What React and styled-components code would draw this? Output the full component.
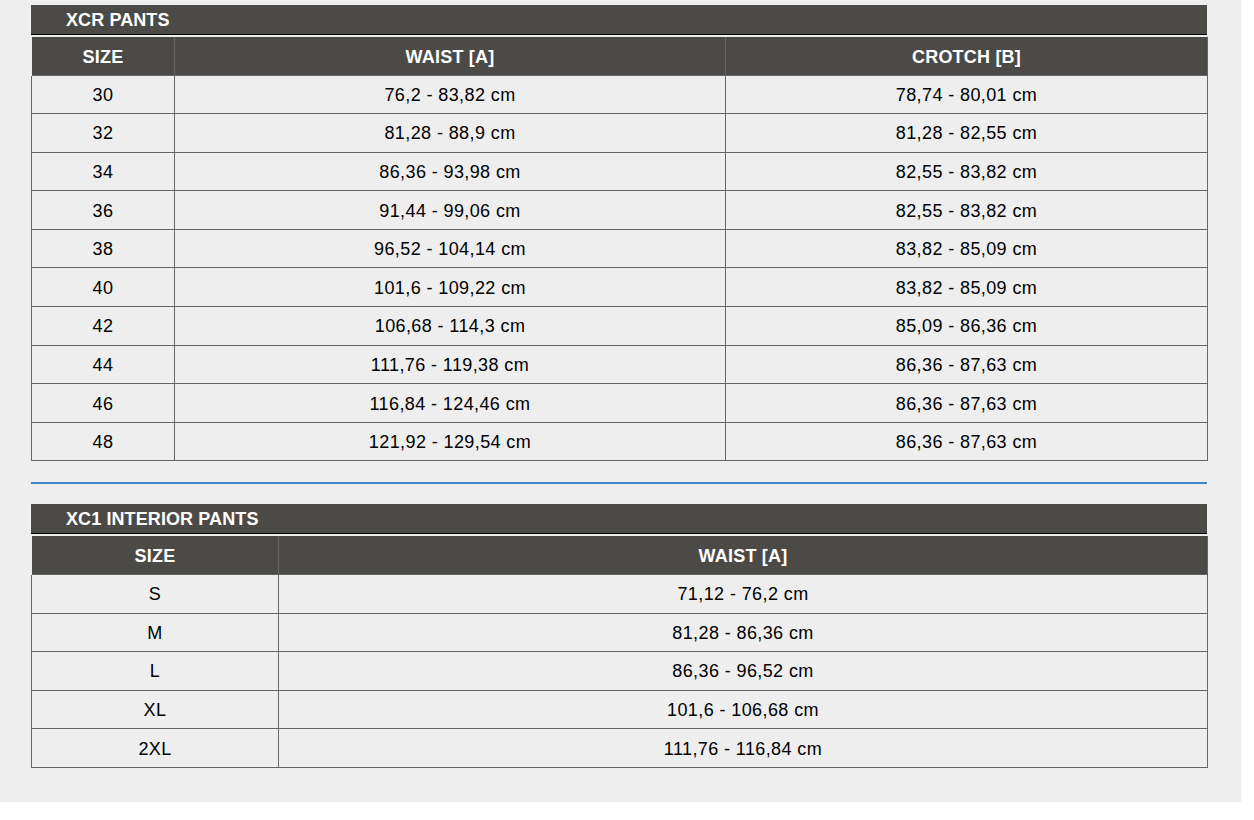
import React from "react";
import styled, { createGlobalStyle } from "styled-components";

const Global = createGlobalStyle`
  html, body { margin: 0; padding: 0; background: #ffffff; }
  body { font-family: "Liberation Sans", Arial, sans-serif; }
`;

const Page = styled.div`
  width: 1241px;
  box-sizing: border-box;
  background: #eeeeee;
  padding: 5px 34px 34px 31px;
  display: flex;
  flex-direction: column;
`;

const Section = styled.section`
  display: flex;
  flex-direction: column;
`;

const TitleBar = styled.div`
  height: 29px;
  background: #4c4a47;
  border-bottom: 1px solid #000;
  color: #fff;
  font-weight: bold;
  font-size: 18px;
  line-height: 31px;
  padding-left: 35px;
  margin-bottom: 2px;
  letter-spacing: 0.1px;
`;

const Divider = styled.hr`
  margin: 21px 0 20px;
  border: 0;
  height: 2px;
  background: #3f87c9;
`;

const Table = styled.table`
  width: 1176px;
  border-collapse: collapse;
  table-layout: fixed;
  font-size: 18px;
`;

const HeadCell = styled.th`
  background: #4c4a47;
  color: #fff;
  font-weight: bold;
  height: 38px;
  padding: 3px 0 0;
  box-sizing: border-box;
  border-left: 1px solid #666;
  border-right: 1px solid #666;
  text-align: center;
  letter-spacing: 0.2px;
  &:first-child { border-left-color: #eeeeee; }
`;

const Row = styled.tr`
  height: 38.6px;
`;

const Cell = styled.td`
  border: 1px solid #666;
  text-align: center;
  color: #000;
  padding: 2px 0 0;
  letter-spacing: 0.4px;
`;

const xcr = [
  ["30", "76,2 - 83,82 cm", "78,74 - 80,01 cm"],
  ["32", "81,28 - 88,9 cm", "81,28 - 82,55 cm"],
  ["34", "86,36 - 93,98 cm", "82,55 - 83,82 cm"],
  ["36", "91,44 - 99,06 cm", "82,55 - 83,82 cm"],
  ["38", "96,52 - 104,14 cm", "83,82 - 85,09 cm"],
  ["40", "101,6 - 109,22 cm", "83,82 - 85,09 cm"],
  ["42", "106,68 - 114,3 cm", "85,09 - 86,36 cm"],
  ["44", "111,76 - 119,38 cm", "86,36 - 87,63 cm"],
  ["46", "116,84 - 124,46 cm", "86,36 - 87,63 cm"],
  ["48", "121,92 - 129,54 cm", "86,36 - 87,63 cm"],
];

const xc1 = [
  ["S", "71,12 - 76,2 cm"],
  ["M", "81,28 - 86,36 cm"],
  ["L", "86,36 - 96,52 cm"],
  ["XL", "101,6 - 106,68 cm"],
  ["2XL", "111,76 - 116,84 cm"],
];

function SizeTable({ title, cols, widths, rows }) {
  return (
    <Section>
      <TitleBar>{title}</TitleBar>
      <Table>
        <colgroup>
          {widths.map((w, i) => (
            <col key={i} style={{ width: w }} />
          ))}
        </colgroup>
        <thead>
          <tr>
            {cols.map((c) => (
              <HeadCell key={c}>{c}</HeadCell>
            ))}
          </tr>
        </thead>
        <tbody>
          {rows.map((r) => (
            <Row key={r[0]}>
              {r.map((v, i) => (
                <Cell key={i}>{v}</Cell>
              ))}
            </Row>
          ))}
        </tbody>
      </Table>
    </Section>
  );
}

export default function App() {
  return (
    <>
      <Global />
      <Page>
        <SizeTable
          title="XCR PANTS"
          cols={["SIZE", "WAIST [A]", "CROTCH [B]"]}
          widths={[143, 551, 482]}
          rows={xcr}
        />
        <Divider />
        <SizeTable
          title="XC1 INTERIOR PANTS"
          cols={["SIZE", "WAIST [A]"]}
          widths={[247, 929]}
          rows={xc1}
        />
      </Page>
    </>
  );
}
